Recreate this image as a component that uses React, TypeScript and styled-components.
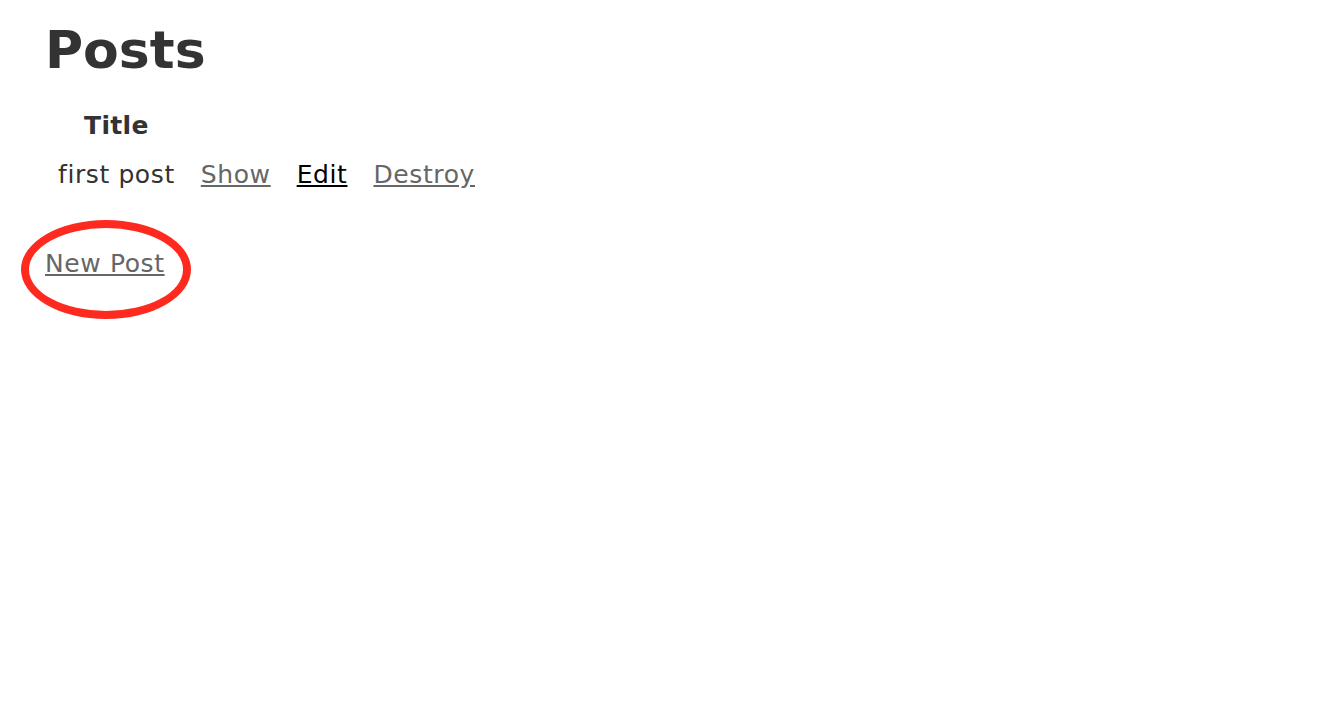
import React from 'react';
import styled, { createGlobalStyle } from 'styled-components'

const GlobalStyle = createGlobalStyle`
  html, body {
    margin: 0;
    padding: 0;
    background: #fff;
  }
  body {
    font-family: "DejaVu Sans", Verdana, sans-serif;
    color: #333;
  }
`;

const Page = styled.div`
  box-sizing: border-box;
  min-height: 100vh;
  padding: 20px 45px 0;
`;

const Heading = styled.h1`
  margin: 0;
  font-size: 52px;
  line-height: 60px;
  font-weight: bold;
  color: #333;
`;

const PostsTable = styled.table`
  margin-top: 32px;
  border-collapse: collapse;
  border-spacing: 0;
  font-size: 25px;
  line-height: 28px;
  letter-spacing: 0.6px;
`;

const HeadCell = styled.th`
  padding: 0 13px;
  text-align: center;
  font-weight: bold;
  letter-spacing: 0.3px;
`;

const Cell = styled.td`
  padding: 21px 13px 0;
  white-space: nowrap;
`;

const RowLink = styled.a<{ $visited?: boolean }>`
  color: ${({ $visited }) => ($visited ? '#666' : '#000')};
  text-decoration: underline;
`;

const FooterRow = styled.div`
  padding-bottom: 60px;
`;

const Footer = styled.div`
  position: relative;
  margin-top: 61px;
  display: inline-block;
  font-size: 25px;
  line-height: 28px;
  letter-spacing: 0.6px;
`;

const Circled = styled.span`
  position: absolute;
  left: -24px;
  top: -30px;
  width: 170px;
  height: 99px;
  box-sizing: border-box;
  border: 8px solid #ff2a1f;
  border-radius: 50%;
  pointer-events: none;
`;

const posts = [{ title: 'first post' }];

const App = () => {
  return (
    <>
      <GlobalStyle />
      <Page>
        <Heading>Posts</Heading>
        <PostsTable>
          <thead>
            <tr>
              <HeadCell>Title</HeadCell>
              <HeadCell colSpan={3}></HeadCell>
            </tr>
          </thead>
          <tbody>
            {posts.map((post) => (
              <tr key={post.title}>
                <Cell>{post.title}</Cell>
                <Cell><RowLink href="#" $visited>Show</RowLink></Cell>
                <Cell><RowLink href="#">Edit</RowLink></Cell>
                <Cell><RowLink href="#" $visited>Destroy</RowLink></Cell>
              </tr>
            ))}
          </tbody>
        </PostsTable>
        <FooterRow>
          <Footer>
            <RowLink href="#" $visited>New Post</RowLink>
            <Circled />
          </Footer>
        </FooterRow>
      </Page>
    </>
  );
}

export default App;
